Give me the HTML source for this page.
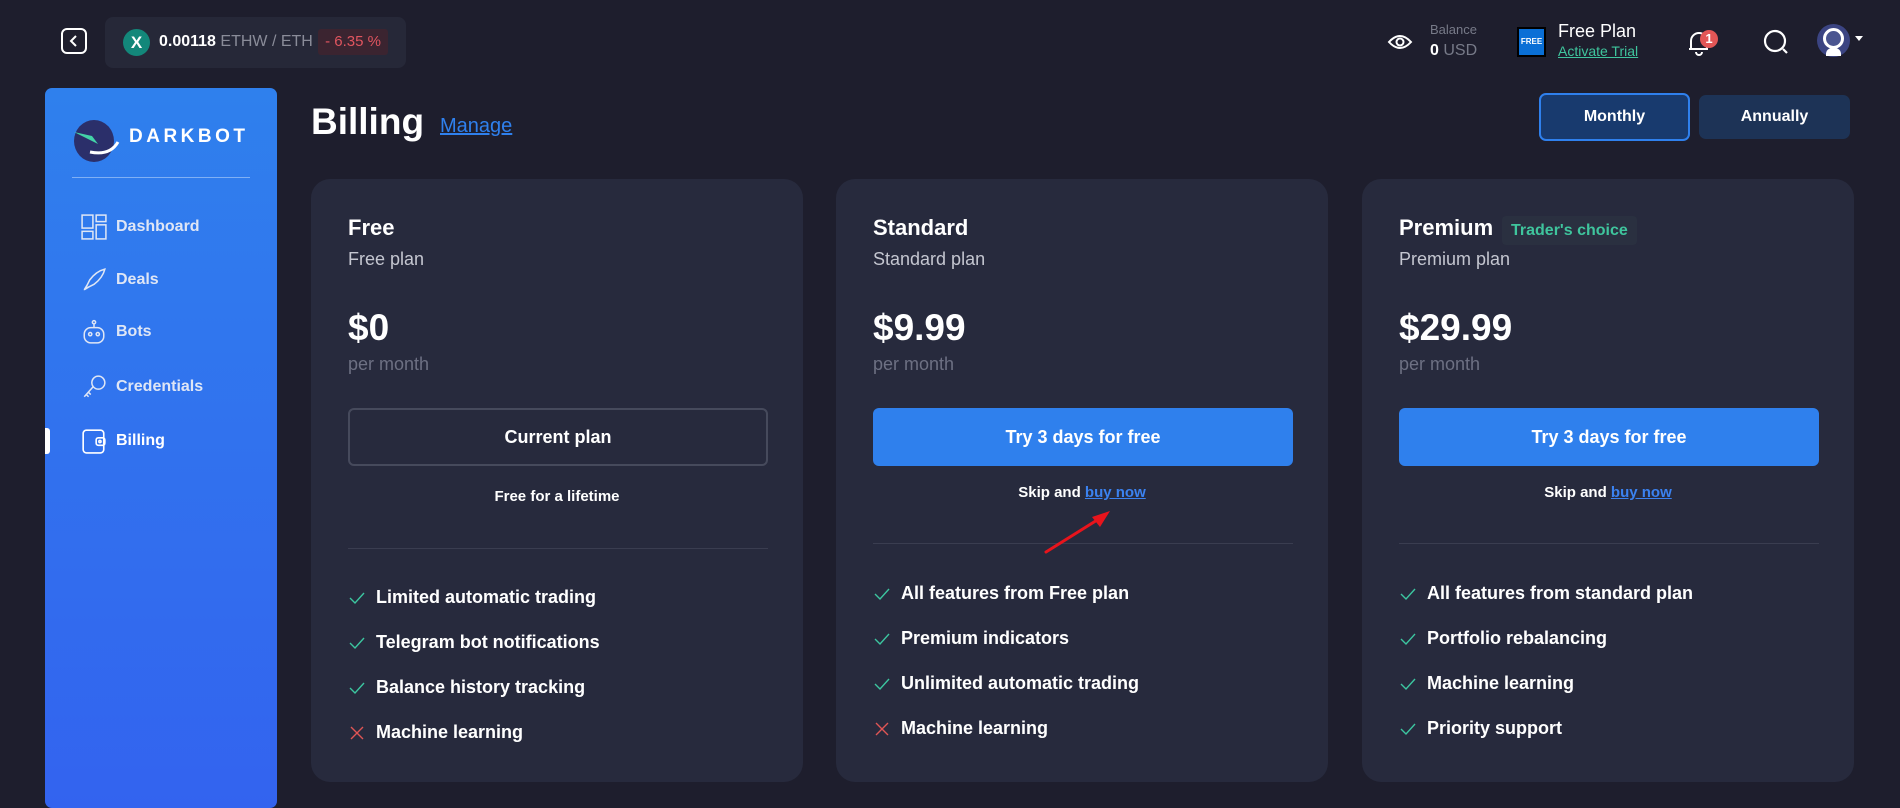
<!DOCTYPE html>
<html><head><meta charset="utf-8"><style>
*{box-sizing:border-box;margin:0;padding:0}
body{width:1900px;height:798px;overflow:hidden;background:#1e1e2d;font-family:"Liberation Sans",sans-serif;color:#fff;position:relative}
.a{position:absolute}
.card{position:absolute;top:179px;width:492px;height:603px;background:#272a3d;border-radius:19px}
.card .t{position:absolute;left:37px;top:36px;font-size:22px;font-weight:700}
.card .s{position:absolute;left:37px;top:70px;font-size:18px;color:#c4c6d0}
.card .p{position:absolute;left:37px;top:128px;font-size:37px;font-weight:700}
.card .pm{position:absolute;left:37px;top:175px;font-size:18px;color:#6d7083}
.card .btn{position:absolute;left:37px;top:229px;width:420px;height:58px;border-radius:6px;display:flex;align-items:center;justify-content:center;font-size:18px;font-weight:700}
.card .note{position:absolute;left:0;width:100%;text-align:center;font-size:15px;font-weight:700}
.card .note u{color:#3b82f0;font-weight:700}
.card .hr{position:absolute;left:37px;width:420px;height:1px;background:#3a3d50}
.card ul{position:absolute;left:37px;list-style:none}
.card li{height:45px;font-size:18px;font-weight:700;display:flex;align-items:center;gap:10px}
.card li svg{width:18px;height:18px}
.nav{position:absolute;left:81px;display:flex;align-items:center;font-size:16px;font-weight:700;color:#dfe6f5}
.nav svg{width:26px;height:26px}
.nav span{position:absolute;left:35px;white-space:nowrap}
</style></head><body>
<!-- top bar -->
<div class="a" style="left:61px;top:28px;width:26px;height:26px;border:2px solid #fff;border-radius:6px"></div>
<svg class="a" style="left:66px;top:33px" width="16" height="16" viewBox="0 0 16 16"><path d="M10 3 L5 8 L10 13" stroke="#fff" stroke-width="2" fill="none"/></svg>
<div class="a" style="left:105px;top:17px;width:301px;height:51px;background:#262838;border-radius:8px"></div>
<div class="a" style="left:123px;top:29px;width:27px;height:27px;border-radius:50%;background:#13877a;font-weight:700;font-size:17px;text-align:center;line-height:27px">X</div>
<div class="a" style="left:159px;top:33px;font-size:16px;font-weight:700">0.00118 <span style="font-weight:400;color:#8a8c99">ETHW / ETH</span></div>
<div class="a" style="left:318px;top:29px;width:70px;height:26px;background:#3b2430;border-radius:3px;color:#e0555f;font-size:15px;text-align:center;line-height:26px">- 6.35 %</div>

<svg class="a" style="left:1387px;top:31px" width="26" height="22" viewBox="0 0 26 22"><path d="M2 11 Q13 -1 24 11 Q13 23 2 11Z" stroke="#fff" stroke-width="2" fill="none"/><circle cx="13" cy="11" r="3.5" stroke="#fff" stroke-width="2" fill="none"/></svg>
<div class="a" style="left:1430px;top:22px;font-size:13px;color:#777a88">Balance</div>
<div class="a" style="left:1430px;top:42px;font-size:16px;color:#777a88"><b style="color:#fff">0</b> USD</div>
<div class="a" style="left:1517px;top:27px;width:29px;height:30px;background:#0a6fd6;border:2px solid #000;font-size:8px;font-weight:700;text-align:center;line-height:26px">FREE</div>
<div class="a" style="left:1558px;top:21px;font-size:18px">Free Plan</div>
<div class="a" style="left:1558px;top:43px;font-size:14px;color:#3fc59d;text-decoration:underline">Activate Trial</div>
<svg class="a" style="left:1686px;top:29px" width="26" height="28" viewBox="0 0 26 28"><path d="M5 20 V12 a8 8 0 0 1 16 0 V20 H3 M10 23 a3 3 0 0 0 6 0" stroke="#fff" stroke-width="2" fill="none"/></svg>
<div class="a" style="left:1700px;top:30px;width:18px;height:18px;border-radius:50%;background:#e25656;font-size:13px;font-weight:700;text-align:center;line-height:18px">1</div>
<svg class="a" style="left:1762px;top:28px" width="28" height="28" viewBox="0 0 28 28"><circle cx="13" cy="13" r="10" stroke="#fff" stroke-width="2.2" fill="none"/><path d="M21 21 L25 25" stroke="#fff" stroke-width="2.2"/></svg>
<div class="a" style="left:1817px;top:24px;width:33px;height:33px;border-radius:50%;background:#3b4482"></div>
<div class="a" style="left:1823px;top:28px;width:21px;height:21px;border-radius:50%;background:#4a5590;border:3px solid #fff"></div>
<div class="a" style="left:1826px;top:48px;width:15px;height:8px;border-radius:6px 6px 0 0;background:#fff"></div>
<div class="a" style="left:1855px;top:36px;border:4px solid transparent;border-top:5px solid #fff"></div>

<!-- sidebar -->
<div class="a" style="left:45px;top:88px;width:232px;height:720px;border-radius:7px;background:linear-gradient(180deg,#2f80ed 0%,#3363ef 100%)"></div>
<div class="a" style="left:74px;top:120px;width:40px;height:42px;border-radius:50%;background:#2b2f6a"></div>
<svg class="a" style="left:70px;top:118px" width="52" height="44" viewBox="0 0 52 44"><path d="M4 14 L22 18 L28 26 Z" fill="#43d3a8"/><path d="M20 34 Q40 38 48 24" stroke="#fff" stroke-width="3" fill="none"/></svg>
<div class="a" style="left:129px;top:126px;font-size:19px;letter-spacing:3.5px;font-weight:700">DARKBOT</div>
<div class="a" style="left:72px;top:177px;width:178px;height:1px;background:#7fb0f5"></div>
<div class="nav" style="top:214px"><svg viewBox="0 0 24 24" fill="none" stroke="#dfe6f5" stroke-width="1.4"><rect x="1" y="1" width="10" height="12"/><rect x="14" y="1" width="9" height="6"/><rect x="1" y="16" width="10" height="7"/><rect x="14" y="10" width="9" height="13"/></svg><span>Dashboard</span></div>
<div class="nav" style="top:267px"><svg viewBox="0 0 24 24" fill="none" stroke="#dfe6f5" stroke-width="1.4"><path d="M4 20 L8 12 Q14 4 22 2 Q20 10 12 16 Z M6 16 L3 21 L8 18"/></svg><span>Deals</span></div>
<div class="nav" style="top:319px"><svg viewBox="0 0 24 24" fill="none" stroke="#dfe6f5" stroke-width="1.4"><rect x="3" y="8" width="18" height="14" rx="6"/><circle cx="12" cy="3" r="1.5"/><path d="M12 5 V8"/><circle cx="8.5" cy="14" r="1.5"/><circle cx="15.5" cy="14" r="1.5"/></svg><span>Bots</span></div>
<div class="nav" style="top:374px"><svg viewBox="0 0 24 24" fill="none" stroke="#dfe6f5" stroke-width="1.4"><circle cx="16" cy="8" r="6"/><path d="M11 12 L3 21 M5 19 L7 21 M7 17 L9 19"/></svg><span>Credentials</span></div>
<div class="a" style="left:45px;top:428px;width:5px;height:26px;background:#fff;border-radius:0 3px 3px 0"></div>
<div class="nav" style="top:428px;color:#fff"><svg viewBox="0 0 24 24" fill="none" stroke="#fff" stroke-width="1.5"><rect x="2" y="2" width="19" height="21" rx="3"/><rect x="14" y="9" width="8" height="7" rx="2"/><circle cx="17.5" cy="12.5" r="1"/></svg><span>Billing</span></div>

<!-- header -->
<div class="a" style="left:311px;top:101px;font-size:37px;font-weight:700">Billing</div>
<div class="a" style="left:440px;top:115px;font-size:20px;color:#2f80ed;text-decoration:underline">Manage</div>
<div class="a" style="left:1539px;top:93px;width:151px;height:48px;border:2px solid #2f80ed;background:#183a6e;border-radius:7px;font-size:16px;font-weight:700;text-align:center;line-height:44px">Monthly</div>
<div class="a" style="left:1699px;top:95px;width:151px;height:44px;background:#1d3356;border-radius:7px;font-size:16px;font-weight:700;text-align:center;line-height:44px">Annually</div>

<!-- cards -->
<div class="card" style="left:311px">
<div class="t">Free</div><div class="s">Free plan</div><div class="p">$0</div><div class="pm">per month</div>
<div class="btn" style="border:2px solid #464a5c">Current plan</div>
<div class="note" style="top:309px">Free for a lifetime</div>
<div class="hr" style="top:369px"></div>
<ul style="top:396px">
<li><svg viewBox="0 0 18 18"><path d="M2 9 L7 14 L16 4" stroke="#3cc6a0" stroke-width="1.4" fill="none"/></svg>Limited automatic trading</li>
<li><svg viewBox="0 0 18 18"><path d="M2 9 L7 14 L16 4" stroke="#3cc6a0" stroke-width="1.4" fill="none"/></svg>Telegram bot notifications</li>
<li><svg viewBox="0 0 18 18"><path d="M2 9 L7 14 L16 4" stroke="#3cc6a0" stroke-width="1.4" fill="none"/></svg>Balance history tracking</li>
<li><svg viewBox="0 0 18 18"><path d="M3 3 L15 15 M15 3 L3 15" stroke="#e05555" stroke-width="1.4" fill="none"/></svg>Machine learning</li>
</ul></div>

<div class="card" style="left:836px">
<div class="t">Standard</div><div class="s">Standard plan</div><div class="p">$9.99</div><div class="pm">per month</div>
<div class="btn" style="background:#2f80ed">Try 3 days for free</div>
<div class="note" style="top:305px">Skip and <u>buy now</u></div>
<div class="hr" style="top:364px"></div>
<ul style="top:392px">
<li><svg viewBox="0 0 18 18"><path d="M2 9 L7 14 L16 4" stroke="#3cc6a0" stroke-width="1.4" fill="none"/></svg>All features from Free plan</li>
<li><svg viewBox="0 0 18 18"><path d="M2 9 L7 14 L16 4" stroke="#3cc6a0" stroke-width="1.4" fill="none"/></svg>Premium indicators</li>
<li><svg viewBox="0 0 18 18"><path d="M2 9 L7 14 L16 4" stroke="#3cc6a0" stroke-width="1.4" fill="none"/></svg>Unlimited automatic trading</li>
<li><svg viewBox="0 0 18 18"><path d="M3 3 L15 15 M15 3 L3 15" stroke="#e05555" stroke-width="1.4" fill="none"/></svg>Machine learning</li>
</ul></div>

<div class="card" style="left:1362px">
<div class="t">Premium</div>
<div class="a" style="left:140px;top:37px;height:29px;padding:0 9px;background:#2a3040;border-radius:4px;color:#3fc59d;font-size:16px;line-height:29px;font-weight:700">Trader's choice</div>
<div class="s">Premium plan</div><div class="p">$29.99</div><div class="pm">per month</div>
<div class="btn" style="background:#2f80ed">Try 3 days for free</div>
<div class="note" style="top:305px">Skip and <u>buy now</u></div>
<div class="hr" style="top:364px"></div>
<ul style="top:392px">
<li><svg viewBox="0 0 18 18"><path d="M2 9 L7 14 L16 4" stroke="#3cc6a0" stroke-width="1.4" fill="none"/></svg>All features from standard plan</li>
<li><svg viewBox="0 0 18 18"><path d="M2 9 L7 14 L16 4" stroke="#3cc6a0" stroke-width="1.4" fill="none"/></svg>Portfolio rebalancing</li>
<li><svg viewBox="0 0 18 18"><path d="M2 9 L7 14 L16 4" stroke="#3cc6a0" stroke-width="1.4" fill="none"/></svg>Machine learning</li>
<li><svg viewBox="0 0 18 18"><path d="M2 9 L7 14 L16 4" stroke="#3cc6a0" stroke-width="1.4" fill="none"/></svg>Priority support</li>
</ul></div>

<svg class="a" style="left:1040px;top:505px" width="80" height="55" viewBox="0 0 80 55"><path d="M6 47 L62 12" stroke="#e8141c" stroke-width="3" stroke-linecap="round"/><path d="M70 6 L52 12 L60 22 Z" fill="#e8141c"/></svg>
</body></html>
